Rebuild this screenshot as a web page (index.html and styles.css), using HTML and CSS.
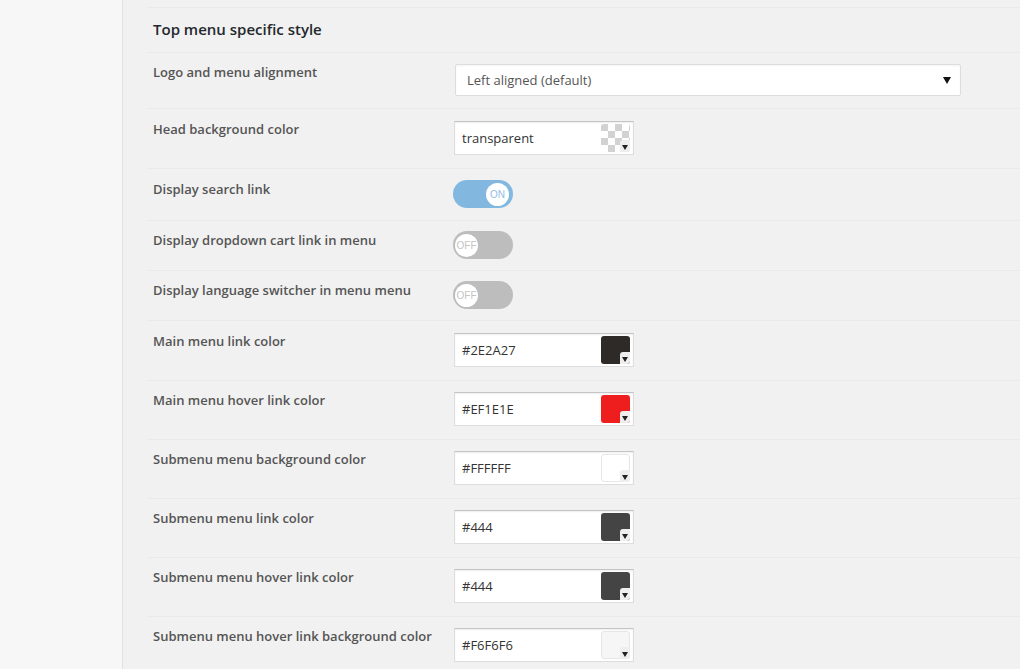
FILE: index.html
```html
<!DOCTYPE html>
<html>
<head>
<meta charset="utf-8">
<link rel="stylesheet" href="styles.css">
</head>
<body>
<div class="page">
  <aside class="sidebar"></aside>
  <main class="main">
    <section class="settings">
      <div class="title-row"><h2 class="title">Top menu specific style</h2></div>

      <div class="row row--select">
        <div class="label">Logo and menu alignment</div>
        <div class="control">
          <div class="select"><span>Left aligned (default)</span><i class="select-arrow"></i></div>
        </div>
      </div>

      <div class="row row--color row--first-color">
        <div class="label">Head background color</div>
        <div class="control">
          <div class="color-field"><span class="color-value">transparent</span><span class="swatch swatch--transparent"><i class="swatch-arrow"></i></span></div>
        </div>
      </div>

      <div class="row row--toggle row--toggle-first">
        <div class="label">Display search link</div>
        <div class="control"><div class="toggle toggle--on"><span class="knob">ON</span></div></div>
      </div>

      <div class="row row--toggle">
        <div class="label">Display dropdown cart link in menu</div>
        <div class="control"><div class="toggle"><span class="knob">OFF</span></div></div>
      </div>

      <div class="row row--toggle">
        <div class="label">Display language switcher in menu menu</div>
        <div class="control"><div class="toggle"><span class="knob">OFF</span></div></div>
      </div>

      <div class="row row--color row--first-color">
        <div class="label">Main menu link color</div>
        <div class="control">
          <div class="color-field"><span class="color-value">#2E2A27</span><span class="swatch" style="background:#2E2A27"><i class="swatch-arrow"></i></span></div>
        </div>
      </div>

      <div class="row row--color">
        <div class="label">Main menu hover link color</div>
        <div class="control">
          <div class="color-field"><span class="color-value">#EF1E1E</span><span class="swatch" style="background:#EF1E1E"><i class="swatch-arrow"></i></span></div>
        </div>
      </div>

      <div class="row row--color">
        <div class="label">Submenu menu background color</div>
        <div class="control">
          <div class="color-field"><span class="color-value">#FFFFFF</span><span class="swatch swatch--light" style="background:#FFFFFF"><i class="swatch-arrow"></i></span></div>
        </div>
      </div>

      <div class="row row--color">
        <div class="label">Submenu menu link color</div>
        <div class="control">
          <div class="color-field"><span class="color-value">#444</span><span class="swatch" style="background:#444444"><i class="swatch-arrow"></i></span></div>
        </div>
      </div>

      <div class="row row--color">
        <div class="label">Submenu menu hover link color</div>
        <div class="control">
          <div class="color-field"><span class="color-value">#444</span><span class="swatch" style="background:#444444"><i class="swatch-arrow"></i></span></div>
        </div>
      </div>

      <div class="row row--color">
        <div class="label">Submenu menu hover link background color</div>
        <div class="control">
          <div class="color-field"><span class="color-value">#F6F6F6</span><span class="swatch swatch--light" style="background:#F6F6F6"><i class="swatch-arrow"></i></span></div>
        </div>
      </div>
    </section>
  </main>
</div>
</body>
</html>
```

FILE: styles.css
```css
* { box-sizing: border-box; }
html, body { margin: 0; padding: 0; }
body {
  font-family: "Open Sans", "Noto Sans", sans-serif;
  background: #f1f1f1;
  color: #444;
  height: 669px;
  overflow: hidden;
}
.page {
  display: flex;
  height: 669px;
}
.sidebar {
  width: 123px;
  flex: 0 0 123px;
  background: #f7f7f7;
  border-right: 1px solid #e2e2e2;
}
.main {
  flex: 1;
  padding: 7px 0 0 24px;
}
.settings {
  display: flex;
  flex-direction: column;
}
.title-row {
  border-top: 1px solid #eaeaea;
  padding: 11px 0 12px 6px;
}
.title {
  margin: 0;
  font-size: 15px;
  line-height: 21px;
  font-weight: 600;
  color: #23282d;
}
.row {
  display: grid;
  grid-template-columns: 307px 1fr;
  align-items: start;
  border-top: 1px solid #eaeaea;
  padding: 10px 0 12px 0;
}
.label {
  padding-left: 6px;
  font-size: 13px;
  line-height: 18px;
  font-weight: 600;
  color: #555;
}
.row--select { padding: 10px 0 12px 0; }
.row--select .control { padding-top: 1px; }
.select {
  width: 506px;
  height: 32px;
  margin-left: 1px;
  background: #fff;
  border: 1px solid #ddd;
  border-radius: 2px;
  box-shadow: inset 0 1px 2px rgba(0,0,0,0.05);
  display: flex;
  align-items: center;
  justify-content: space-between;
  padding: 0 9px 0 11px;
  font-size: 13px;
  color: #555;
}
.select-arrow {
  width: 0;
  height: 0;
  border-left: 4px solid transparent;
  border-right: 4px solid transparent;
  border-top: 7px solid #111;
}
.row--color { padding: 10px 0 13px 0; }
.row--color .control { padding-top: 1px; }
.row--first-color { padding-top: 11px; }
.color-field {
  width: 180px;
  height: 34px;
  background: #fff;
  border: 1px solid #ddd;
  border-top-color: #c4c4c4;
  box-shadow: inset 0 1px 2px rgba(0,0,0,0.07);
  display: flex;
  align-items: flex-start;
  justify-content: space-between;
  padding: 2px 3px 0 7px;
}
.color-value {
  font-size: 13px;
  line-height: 29px;
  color: #333;
}
.swatch {
  position: relative;
  width: 29px;
  height: 28px;
  border-radius: 3px;
  display: block;
}
.swatch--light {
  border: 1px solid #e6e6e6;
}
.swatch--transparent {
  background-color: #fff;
  background-image: conic-gradient(#ffffff 25%, #d2d2d2 0 50%, #ffffff 0 75%, #d2d2d2 0);
  background-size: 14px 14px;
  background-position: 0 0;
}
.swatch-arrow {
  position: absolute;
  right: 0;
  bottom: 0;
  width: 10px;
  height: 12px;
  background: #eeeeee;
  border-radius: 3px 0 3px 0;
  display: flex;
  align-items: center;
  justify-content: center;
}
.swatch--light .swatch-arrow { right: -1px; bottom: -1px; }
.swatch-arrow::after {
  content: "";
  width: 0;
  height: 0;
  margin-top: 2px;
  border-left: 3px solid transparent;
  border-right: 3px solid transparent;
  border-top: 5px solid #222;
}
.row--toggle { padding: 10px 0 11px 0; }
.row--toggle-first { padding: 11px 0 12px 0; }
.toggle {
  width: 60px;
  height: 28px;
  margin-left: -1px;
  border-radius: 14px;
  background: #bdbdbd;
  display: flex;
  align-items: center;
  padding: 0 2px;
}
.toggle--on {
  background: #82b8e0;
  justify-content: flex-end;
  padding: 0 4px;
}
.knob {
  width: 23px;
  height: 23px;
  border-radius: 50%;
  background: #fff;
  font-family: "Liberation Sans", Arial, sans-serif;
  font-size: 10px;
  color: #c4c4c4;
  display: flex;
  align-items: center;
  justify-content: center;
}
.toggle--on .knob { color: #8fbde2; }
```
